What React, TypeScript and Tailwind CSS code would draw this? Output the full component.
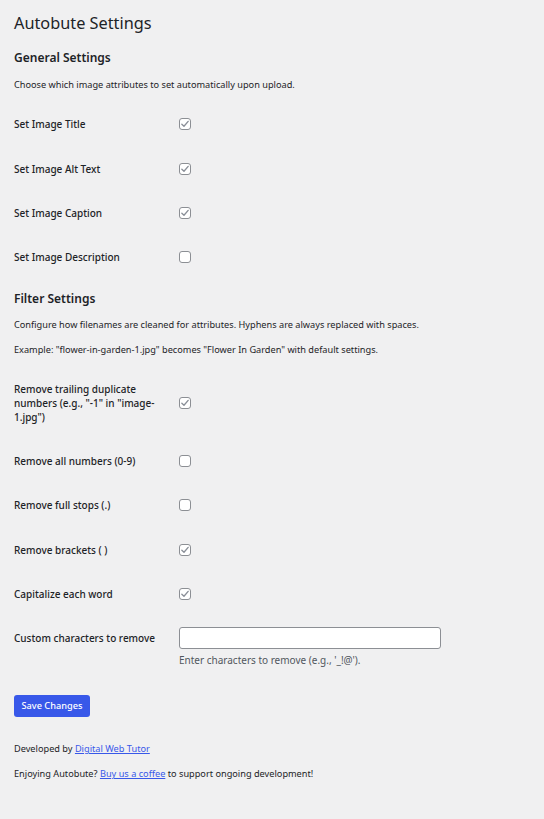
import React from 'react';

const font = { fontFamily: '"Noto Sans", "Open Sans", sans-serif' };

const Check: React.FC<{ on?: boolean }> = ({ on }) => (
  <span className="w-[12px] h-[12px] rounded-[3px] border border-[#8c8f94] bg-white flex items-center justify-center shrink-0">
    {on && (
      <svg viewBox="0 0 12 12" className="w-[10px] h-[10px]">
        <path d="M2.2 6.2 L4.8 8.7 L9.8 2.8" fill="none" stroke="#8a8f98" strokeWidth="1.6" strokeLinecap="round" strokeLinejoin="round" />
      </svg>
    )}
  </span>
);

const Row: React.FC<{ label: string; on?: boolean }> = ({ label, on }) => (
  <div className="flex items-center">
    <div className="w-[165px] pr-[12px] py-[15.2px] text-[10px] leading-[14px] font-medium text-[#1d2327]">{label}</div>
    <Check on={on} />
  </div>
);

export default function App() {
  return (
    <div className="min-h-screen bg-[#f0f0f1] text-[#1d2327] px-[14px] pt-[12px]" style={font}>
      <h1 className="text-[16.3px] leading-[23px] font-normal">Autobute Settings</h1>

      <h2 className="mt-[14px] text-[12px] leading-[17px] font-semibold">General Settings</h2>
      <p className="mt-[13px] text-[9.2px] leading-[12px]">Choose which image attributes to set automatically upon upload.</p>

      <div className="mt-[11px]">
        <Row label="Set Image Title" on />
        <Row label="Set Image Alt Text" on />
        <Row label="Set Image Caption" on />
        <Row label="Set Image Description" />
      </div>

      <h2 className="mt-[10px] text-[12px] leading-[17px] font-semibold">Filter Settings</h2>
      <p className="mt-[12px] text-[9.2px] leading-[12px]">Configure how filenames are cleaned for attributes. Hyphens are always replaced with spaces.</p>
      <p className="mt-[13px] text-[9.2px] leading-[12px]">Example: "flower-in-garden-1.jpg" becomes "Flower In Garden" with default settings.</p>

      <div className="mt-[11px]">
        <Row label={'Remove trailing duplicate numbers (e.g., "-1" in "image-1.jpg")'} on />
        <Row label="Remove all numbers (0-9)" />
        <Row label="Remove full stops (.)" />
        <Row label="Remove brackets ( )" on />
        <Row label="Capitalize each word" on />
        <div className="flex items-start">
          <div className="w-[165px] pr-[12px] pt-[15px] text-[10px] leading-[14px] font-medium">Custom characters to remove</div>
          <div className="pt-[8px]">
            <input
              type="text"
              className="w-[262px] h-[22px] rounded-[3px] border border-[#8c8f94] bg-white px-[6px] text-[10px] outline-none"
            />
            <p className="mt-[5px] text-[10px] leading-[12px] text-[#50575e]">Enter characters to remove (e.g., '_!@').</p>
          </div>
        </div>
      </div>

      <button className="mt-[29px] h-[22px] w-[76px] rounded-[3px] bg-[#3858e9] text-white text-[9.2px] font-medium leading-[20px]">
        Save Changes
      </button>

      <p className="mt-[26px] text-[9.2px] leading-[12px]">
        Developed by <a href="#" className="text-[#3858e9] underline">Digital Web Tutor</a>
      </p>
      <p className="mt-[13px] text-[9.2px] leading-[12px] pb-[39px]">
        Enjoying Autobute? <a href="#" className="text-[#3858e9] underline">Buy us a coffee</a> to support ongoing development!
      </p>
    </div>
  );
}
